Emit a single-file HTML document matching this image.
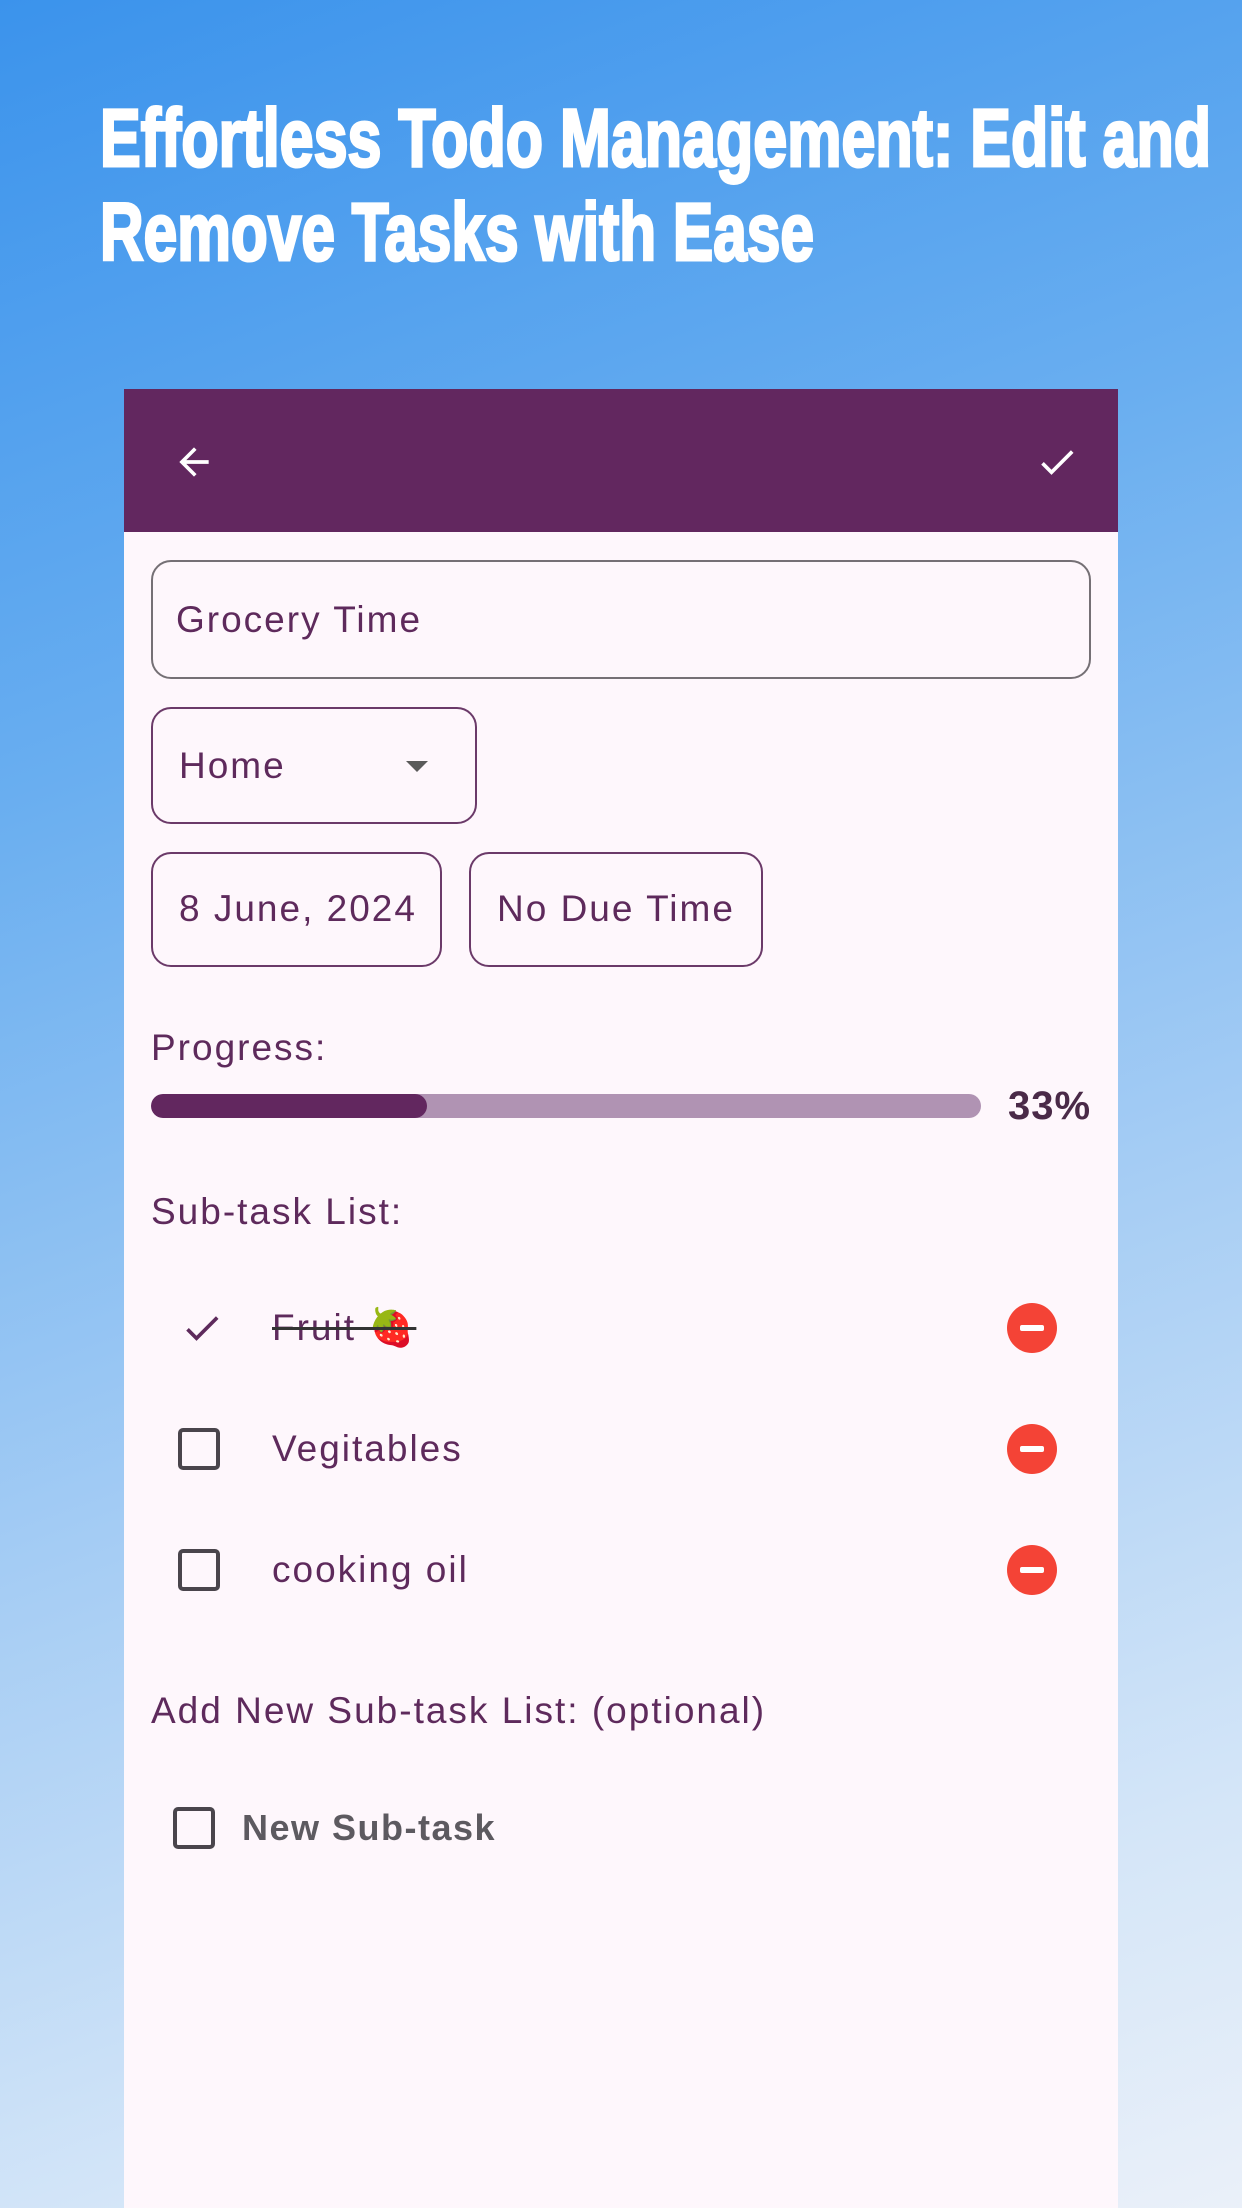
<!DOCTYPE html>
<html><head><meta charset="utf-8"><style>
*{margin:0;padding:0;box-sizing:border-box}
body{width:1242px;height:2208px;overflow:hidden;position:relative;background:linear-gradient(160deg,#3b93ec 0%,#69aef0 30%,#a6cdf4 60%,#d5e6f8 85%,#eaf0f9 100%);font-family:"Liberation Sans",sans-serif}
.ph{position:absolute;left:124px;top:389px;width:994px;height:1819px;background:#fef7fc}
.bar{position:absolute;left:0;top:0;width:994px;height:143px;background:#62275f}
.a{position:absolute;font-size:37px;letter-spacing:2px;color:#5e2a5c;white-space:nowrap;line-height:40px}
.box{position:absolute;border:2.5px solid #6b3a69;border-radius:20px}
.cb{position:absolute;width:42px;height:42px;border:4px solid #4a454c;border-radius:5px}
.mn{position:absolute;width:50px;height:50px;border-radius:50%;background:#f44336}
.mn::after{content:"";position:absolute;left:13px;top:22px;width:24px;height:6px;background:#fff;border-radius:2px}
</style></head><body>
<svg style="position:absolute;left:0;top:0" width="1242" height="300">
<g fill="#fff" stroke="#fff" stroke-width="3" font-family="Liberation Sans Narrow, Liberation Sans, sans-serif" font-weight="bold" font-size="82">
<text x="100" y="166" textLength="1111" lengthAdjust="spacingAndGlyphs">Effortless Todo Management: Edit and</text>
<text x="100" y="260" textLength="714" lengthAdjust="spacingAndGlyphs">Remove Tasks with Ease</text>
</g>
</svg>
<div class="ph">
<div class="bar">
<svg style="position:absolute;left:48px;top:51px" width="44" height="44" viewBox="0 0 24 24"><path d="M20 11H7.8l5.6-5.6L12 4l-8 8 8 8 1.4-1.4L7.8 13H20z" fill="#fff"/></svg>
<svg style="position:absolute;left:911px;top:51px" width="44" height="44" viewBox="0 0 24 24"><path d="M9 16.2L4.8 12l-1.4 1.4L9 19 21 7l-1.4-1.4z" fill="#fff"/></svg>
</div>
<div class="box" style="left:27px;top:171px;width:940px;height:119px;border-color:#757075"></div>
<div class="a" style="left:52px;top:211px">Grocery Time</div>
<div class="box" style="left:27px;top:318px;width:326px;height:117px"></div>
<div class="a" style="left:55px;top:357px">Home</div>
<div style="position:absolute;left:282px;top:372px;width:0;height:0;border-left:11px solid transparent;border-right:11px solid transparent;border-top:11px solid #5a5a5a"></div>
<div class="box" style="left:27px;top:463px;width:291px;height:115px"></div>
<div class="a" style="left:55px;top:500px;letter-spacing:2px">8 June, 2024</div>
<div class="box" style="left:345px;top:463px;width:294px;height:115px"></div>
<div class="a" style="left:373px;top:500px;letter-spacing:2px">No Due Time</div>
<div class="a" style="left:27px;top:639px">Progress:</div>
<div style="position:absolute;left:27px;top:705px;width:830px;height:24px;border-radius:12px;background:#b093b3;overflow:hidden"><div style="width:276px;height:24px;border-radius:12px;background:#62275f"></div></div>
<div class="a" style="left:884px;top:697px;font-weight:bold;color:#4a2a48;font-size:40px;letter-spacing:1px">33%</div>
<div class="a" style="left:27px;top:803px">Sub-task List:</div>
<svg style="position:absolute;left:56px;top:917px" width="44" height="44" viewBox="0 0 24 24"><path d="M9 16.2L4.8 12l-1.4 1.4L9 19 21 7l-1.4-1.4z" fill="#5e2a5c"/></svg>
<div class="a" style="left:148px;top:919px;text-decoration:line-through;text-decoration-color:#333">Fruit 🍓</div>
<div class="mn" style="left:883px;top:914px"></div>
<div class="cb" style="left:54px;top:1039px"></div>
<div class="a" style="left:148px;top:1040px">Vegitables</div>
<div class="mn" style="left:883px;top:1035px"></div>
<div class="cb" style="left:54px;top:1160px"></div>
<div class="a" style="left:148px;top:1161px">cooking oil</div>
<div class="mn" style="left:883px;top:1156px"></div>
<div class="a" style="left:27px;top:1302px">Add New Sub-task List: (optional)</div>
<div class="cb" style="left:49px;top:1418px"></div>
<div class="a" style="left:118px;top:1419px;color:#5d5a60;font-weight:bold;font-size:36px;letter-spacing:1.5px">New Sub-task</div>
</div>
</body></html>
